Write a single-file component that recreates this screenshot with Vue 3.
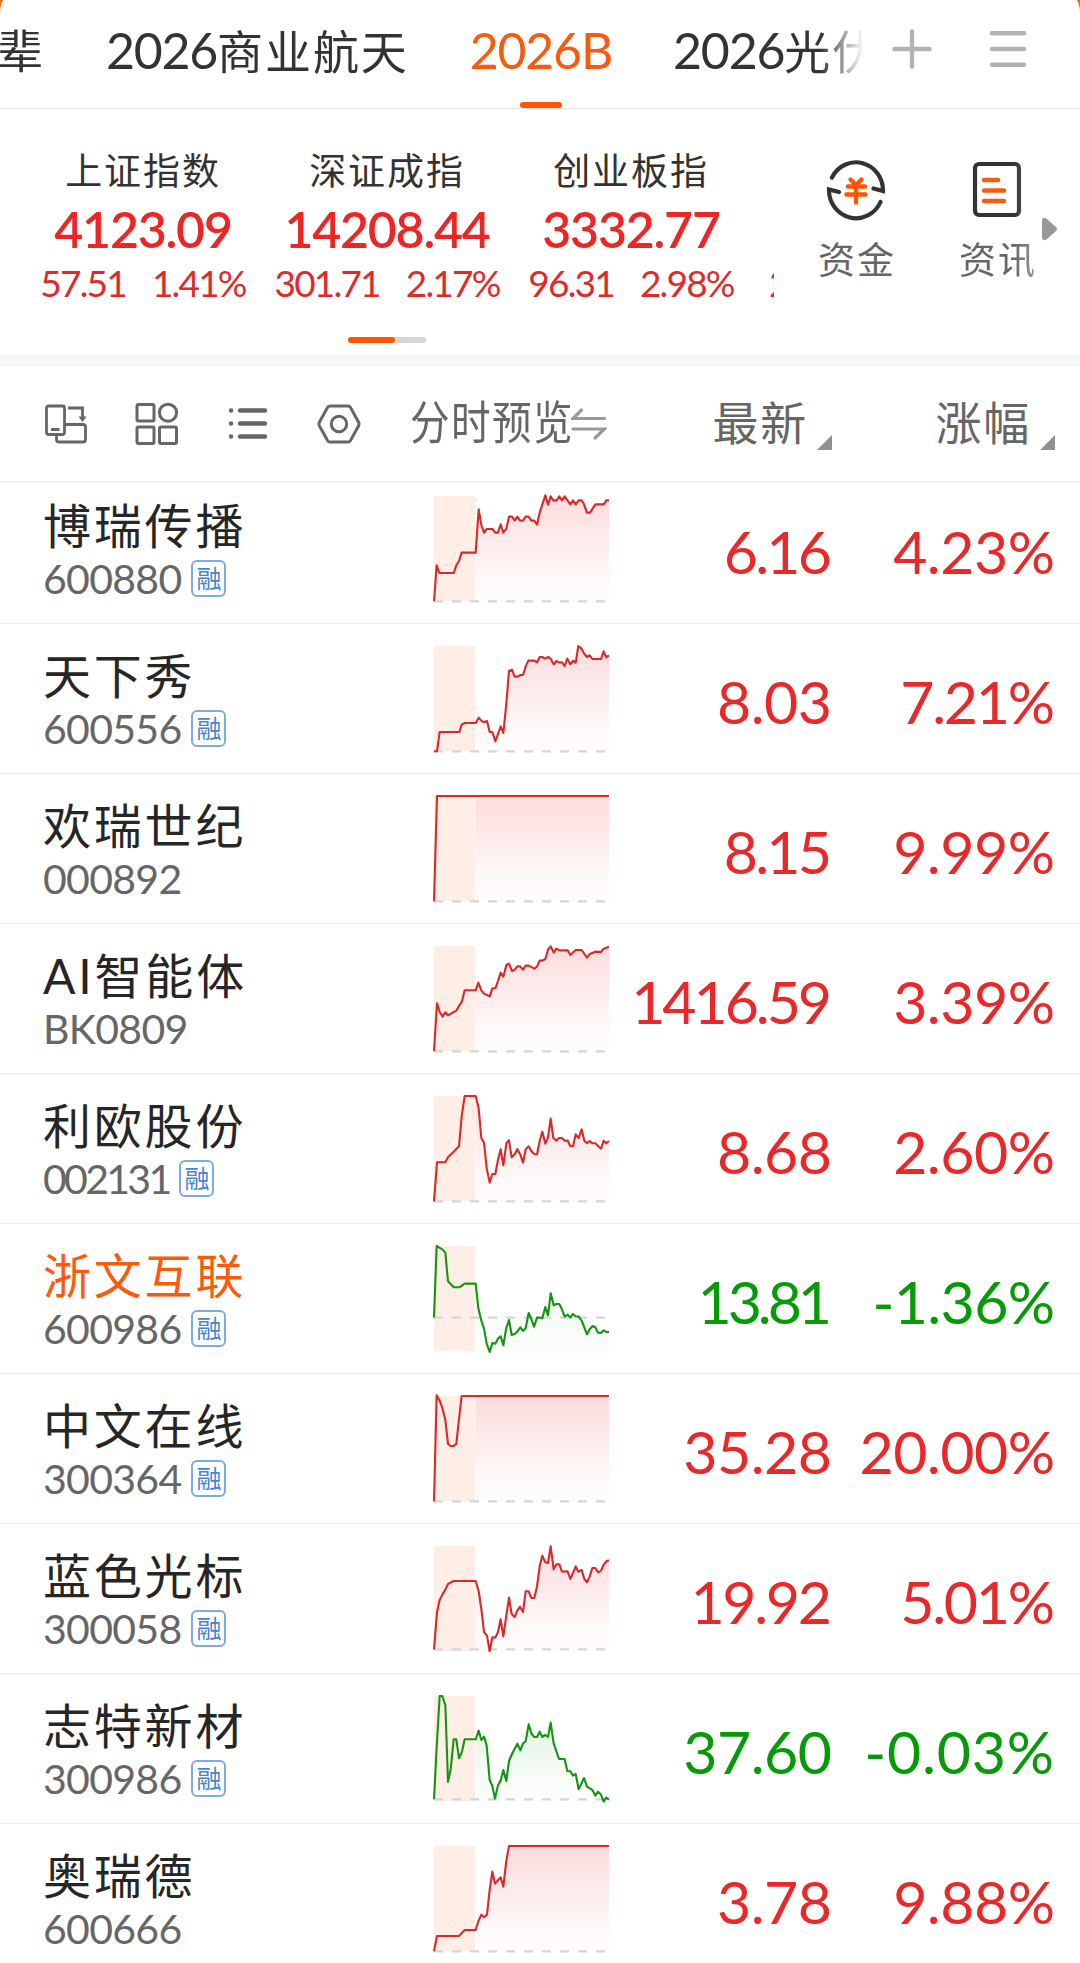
<script setup>
import { ref } from 'vue'

const tabs = [
  { year: '', name: '辈' },
  { year: '2026', name: '商业航天' },
  { year: '2026B', name: '' },
  { year: '2026', name: '光伏' },
]
const activeTab = ref(2)

const indices = [
  { name: '上证指数', value: '4123.09', change: '57.51', percent: '1.41%' },
  { name: '深证成指', value: '14208.44', change: '301.71', percent: '2.17%' },
  { name: '创业板指', value: '3332.77', change: '96.31', percent: '2.98%' },
]

// chart points live in a 525 x 316 box that starts at 42,48
const stocks = [
  {
    name: '博瑞传播', code: '600880', margin: true, price: '6.16', percent: '4.23%', base: 364,
    points: '42,364 50,256 58,279 101,279 109,256 117,243 125,218 167,218 176,88 184,135 192,158 200,147 217,147 226,158 234,158 242,133 250,158 259,146 267,110 276,110 284,122 292,110 300,122 309,122 317,110 326,110 334,122 343,122 351,134 359,98 367,73 376,46 384,74 392,49 400,61 410,61 418,49 426,61 434,49 451,73 459,61 467,73 476,61 485,61 492,73 501,98 510,98 526,73 551,73 559,61 567,61',
  },
  {
    name: '天下秀', code: '600556', margin: true, price: '8.03', percent: '7.21%', base: 364,
    points: '42,364 51,364 59,306 118,306 125,284 134,279 167,279 176,263 184,272 192,277 201,273 209,306 217,306 226,334 242,289 250,309 259,220 267,123 276,119 284,140 293,140 301,135 309,135 317,109 325,92 343,92 351,97 359,81 367,81 375,86 384,81 392,86 401,103 409,93 417,97 426,97 434,108 442,86 451,103 459,92 467,98 475,48 484,55 492,70 501,81 509,76 517,87 543,87 551,64 559,82 567,76',
  },
  {
    name: '欢瑞世纪', code: '000892', margin: false, price: '8.15', percent: '9.99%', base: 364,
    points: '42,364 51,48 567,48',
  },
  {
    name: 'AI智能体', code: 'BK0809', margin: false, price: '1416.59', percent: '3.39%', base: 364,
    points: '42,364 51,220 59,246 68,260 76,247 84,256 109,242 117,228 126,214 134,181 167,181 175,158 184,181 192,191 209,199 217,175 226,175 234,153 242,128 250,140 259,105 267,101 276,123 284,119 292,109 300,109 309,119 317,107 326,107 343,116 351,110 359,92 367,92 376,87 384,59 392,49 401,68 409,56 418,61 443,61 451,75 467,60 485,60 501,83 509,72 526,65 543,66 551,56 567,50',
  },
  {
    name: '利欧股份', code: '002131', margin: true, price: '8.68', percent: '2.60%', base: 364,
    points: '42,364 51,247 76,247 84,232 101,215 117,199 125,110 134,48 167,48 176,85 184,174 192,188 200,264 209,308 217,282 226,282 234,239 242,208 250,256 259,190 267,181 275,232 284,223 292,207 301,224 309,248 317,208 326,199 334,213 343,223 351,223 359,183 367,155 376,191 384,172 392,116 400,174 409,182 417,174 426,174 434,182 443,182 451,199 459,199 467,163 476,174 485,148 493,182 501,190 509,183 517,190 526,190 543,206 551,182 559,190 567,183',
  },
  {
    name: '浙文互联', code: '600986', margin: true, price: '13.81', percent: '-1.36%', base: 263, down: true, active: true,
    points: '42,263 50,48 58,53 67,58 76,68 84,154 101,172 118,172 134,161 167,161 175,234 184,272 192,296 200,341 209,366 217,339 226,341 234,326 242,319 250,346 259,293 267,270 275,315 284,312 292,305 301,292 309,303 317,294 326,249 334,267 342,290 351,263 359,263 367,265 376,231 384,256 392,190 401,226 409,222 418,222 426,238 434,260 443,254 451,263 459,252 467,259 476,260 485,272 501,313 509,298 518,288 526,292 534,308 543,309 551,301 559,306 567,306',
  },
  {
    name: '中文在线', code: '300364', margin: true, price: '35.28', percent: '20.00%', base: 364,
    points: '42,364 50,46 59,62 67,84 76,120 84,192 92,198 101,198 109,191 117,117 125,48 567,48',
  },
  {
    name: '蓝色光标', code: '300058', margin: true, price: '19.92', percent: '5.01%', base: 358,
    points: '42,358 51,247 59,210 67,194 76,179 84,162 101,153 167,153 176,183 184,237 192,306 201,317 209,364 217,322 226,323 234,306 242,268 250,319 259,256 267,203 275,252 284,261 292,242 300,230 309,246 317,184 326,184 334,204 343,204 351,170 359,108 367,77 376,97 384,99 392,49 401,118 409,103 418,103 426,125 443,124 451,147 459,129 467,109 475,125 485,120 493,147 501,157 509,140 517,114 526,114 534,127 543,122 551,104 559,94 567,91',
  },
  {
    name: '志特新材', code: '300986', margin: true, price: '37.60', percent: '-0.03%', base: 358, down: true,
    points: '42,358 50,202 59,48 67,48 76,76 84,306 92,268 101,178 109,178 117,235 126,215 134,178 167,178 176,152 184,180 192,170 200,197 209,300 217,318 225,356 234,316 242,302 250,270 259,303 267,243 276,222 292,191 301,211 309,190 317,184 326,133 334,160 342,171 351,171 359,155 367,171 376,165 384,171 392,128 401,190 417,237 434,237 442,273 451,274 459,287 467,282 476,328 492,294 501,320 517,330 526,347 534,335 543,344 551,365 559,353 567,359',
  },
  {
    name: '奥瑞德', code: '600666', margin: false, price: '3.78', percent: '9.88%', base: 364,
    points: '42,364 51,318 117,318 134,300 167,300 175,274 184,254 192,262 201,254 209,180 217,125 225,161 242,142 250,170 259,92 267,48 567,48',
  },
]

// the gradient only covers the session after the pre-market band
function areaPoints(stock) {
  const session = stock.points.split(' ').filter((p) => Number(p.split(',')[0]) >= 167)
  if (Number(session[0].split(',')[0]) > 167) {
    session.unshift('167,48')
  }
  return `167,364 ${session.join(' ')} 567,364`
}

// the digits are tabular: tighten around a "1", give room to a minus sign
function tracking(text, base, narrow) {
  const ones = text.split('1').length - 1
  const minus = text.startsWith('-') ? 8 : 0
  return { '--tracking': `${base + (minus - ones * narrow) / text.length}px` }
}
</script>

<template>
  <div class="page">
    <header class="tab-bar">
      <nav class="tabs">
        <div
          v-for="(tab, i) in tabs"
          :key="i"
          class="tab"
          :class="{ active: i === activeTab }"
          @click="activeTab = i"
        >
          <span v-if="tab.year" class="tab-year">{{ tab.year }}</span><span class="tab-name">{{ tab.name }}</span>
        </div>
      </nav>
      <svg class="tab-add" width="40" height="40" viewBox="0 0 40 40">
        <path d="M2.5 20H37.5M20 2.5V37.5" stroke="#b2b2b2" stroke-width="4.4" stroke-linecap="round" />
      </svg>
      <svg class="tab-menu" width="40" height="40" viewBox="0 0 40 40">
        <path d="M4 4.2H36M4 20H36M4 35.8H36" stroke="#b2b2b2" stroke-width="4.4" stroke-linecap="round" />
      </svg>
    </header>

    <section class="market">
      <div class="market-left">
        <div class="indices">
          <div v-for="item in indices" :key="item.name" class="index">
            <div class="index-name">{{ item.name }}</div>
            <div class="index-value">{{ item.value }}</div>
            <div class="index-change">
              <span>{{ item.change }}</span>
              <span>{{ item.percent }}</span>
            </div>
          </div>
          <div class="index index-next">
            <div class="index-change"><span>28.51</span></div>
          </div>
        </div>
        <div class="pager"><i></i></div>
      </div>
      <div class="shortcuts">
        <div class="shortcut">
          <svg width="60" height="62" viewBox="0 0 60 62" fill="none">
            <g stroke="#333" stroke-width="4.2" stroke-linecap="round">
              <path d="M6 18.500A27 28 0 0 1 57 32L47.500 29.500" />
              <path d="M54.500 43A27 28 0 0 1 3 30.500L13 33" />
            </g>
            <path d="M24.500 20.500L30 26L35.500 20.500M22 27.500H39M20.500 35.500H39.500M30 27V43.500" stroke="#ff5500" stroke-width="4.4" stroke-linecap="round" />
          </svg>
          <span>资金</span>
        </div>
        <div class="shortcut shortcut-news">
          <svg width="60" height="62" viewBox="0 0 60 62" fill="none">
            <rect x="8" y="5" width="44" height="51" rx="4" stroke="#333" stroke-width="4.2" />
            <path d="M17 21H31M17 31.500H37M17 42H37" stroke="#f75b10" stroke-width="4.4" stroke-linecap="round" />
          </svg>
          <span>资讯</span>
        </div>
        <svg class="more" width="16" height="24" viewBox="0 0 16 24">
          <path d="M0 3Q1-1 5 2L14 10Q16 12 14 14L5 22Q1 25 0 21Z" fill="#999" />
        </svg>
      </div>
    </section>

    <section class="table-head">
      <div class="tools">
        <svg width="44" height="44" viewBox="0 0 44 44" fill="none" stroke="#666" stroke-width="2.8">
          <rect x="2.5" y="4" width="18" height="28.5" rx="2" />
          <path d="M12.5 33V37.5Q12.5 40 15 40H39Q41.5 40 41.5 37.5V25Q41.5 22.5 39 22.5H21" />
          <path d="M7 27.5H15.5" stroke-width="3" />
          <path d="M24 6H38.5V15" />
          <path d="M34.500 14.500H42.500L38.500 20Z" fill="#666" stroke="none" />
        </svg>
        <svg width="44" height="44" viewBox="0 0 44 44" fill="none" stroke="#666" stroke-width="3">
          <rect x="2" y="2.5" width="17" height="16.500" rx="1.500" />
          <ellipse cx="33" cy="10.700" rx="8.600" ry="8.500" />
          <rect x="2" y="25" width="17" height="16.500" rx="1.500" />
          <rect x="24.500" y="25" width="17" height="16.500" rx="1.500" />
        </svg>
        <svg width="44" height="44" viewBox="0 0 44 44" fill="none" stroke="#666" stroke-width="4.4" stroke-linecap="round">
          <path d="M14 8.500H39M14 21.500H39M14 34.500H39M5 8.500H5.100M5 21.500H5.100M5 34.500H5.100" />
        </svg>
        <svg width="44" height="44" viewBox="0 0 44 44" fill="none" stroke="#666" stroke-width="3">
          <path d="M13 4H31Q32.500 4 33.500 5.500L41.500 20Q42.500 22 41.500 24L33.500 38.500Q32.500 40 31 40H13Q11.500 40 10.500 38.500L2.500 24Q1.500 22 2.500 20L10.500 5.500Q11.500 4 13 4Z" />
          <circle cx="22" cy="22" r="7.700" />
        </svg>
      </div>
      <div class="head-preview">
        <span>分时预览</span>
        <svg width="36" height="32" viewBox="0 0 36 32" fill="none" stroke="#999" stroke-width="3.2" stroke-linecap="round">
          <path d="M33.500 10.500H2L10.500 2M2 21H33.500L24 30" />
        </svg>
      </div>
      <div class="head-cell">最新<i class="sort"></i></div>
      <div class="head-cell head-percent">涨幅<i class="sort"></i></div>
    </section>

    <main class="list">
      <div v-for="(stock, i) in stocks" :key="stock.code" class="row" :class="{ down: stock.down }">
        <div class="stock">
          <div class="stock-name" :class="{ active: stock.active }">{{ stock.name }}</div>
          <div class="stock-code">
            <span class="code" :style="tracking(stock.code, -0.7, 6)">{{ stock.code }}</span>
            <span v-if="stock.margin" class="badge">融</span>
          </div>
        </div>
        <svg class="chart" viewBox="42 48 525 316" preserveAspectRatio="none">
          <defs>
            <linearGradient :id="`fill-${i}`" gradientUnits="userSpaceOnUse" x1="0" y1="48" x2="0" y2="364">
              <stop offset="0" :stop-color="stock.down ? '#0a9a0a' : '#ee2020'" stop-opacity="0.16" />
              <stop offset="0.8" :stop-color="stock.down ? '#0a9a0a' : '#ee2020'" stop-opacity="0.025" />
              <stop offset="1" :stop-color="stock.down ? '#0a9a0a' : '#ee2020'" stop-opacity="0.015" />
            </linearGradient>
          </defs>
          <rect x="42" y="48" width="123" height="316" fill="#ffeee6" />
          <polygon :points="areaPoints(stock)" :fill="`url(#fill-${i})`" />
          <path :d="`M42 ${stock.base}H567`" stroke="#d5d6db" stroke-width="7" stroke-dasharray="27 27" />
          <polyline
            :points="stock.points"
            fill="none"
            :stroke="stock.down ? '#129512' : '#db2828'"
            stroke-width="6.3"
            stroke-linejoin="round"
          />
        </svg>
        <div class="price" :style="tracking(stock.price, -0.5, 9)">{{ stock.price }}</div>
        <div class="percent" :style="tracking(stock.percent, -0.5, 9)">{{ stock.percent }}</div>
      </div>
    </main>
  </div>
</template>

<style>
body {
  overflow: hidden;
  background: #fff;
}
</style>

<style scoped>
.page {
  width: 1080px;
  height: 1963px;
  overflow: hidden;
  background: linear-gradient(#f2640f 20px, #fff 20px);
  font-family: Lato, 'Noto Sans CJK SC', sans-serif;
  color: #333;
}

.tab-bar {
  display: flex;
  align-items: center;
  box-sizing: border-box;
  height: 109px;
  padding-bottom: 10px;
  border-bottom: 1px solid #e5e5e5;
  border-radius: 4px 4px 0 0 / 14px 14px 0 0;
  background: #fff;
}

.tabs {
  display: flex;
  flex: none;
  gap: 61px;
  width: 864px;
  height: 108px;
  margin-bottom: -9px;
  overflow: hidden;
  white-space: nowrap;
  -webkit-mask-image: linear-gradient(90deg, #000 820px, transparent 864px);
  mask-image: linear-gradient(90deg, #000 820px, transparent 864px);
}

.tab {
  position: relative;
  display: flex;
  flex: none;
  align-items: baseline;
  height: 108px;
  line-height: 101px;
  cursor: pointer;
}

.tab:first-child {
  margin-left: -3px;
}

.tab-year {
  font-size: 50px;
  letter-spacing: -1.2px;
}

.tab-name {
  font-size: 46px;
  letter-spacing: 1.9px;
}

.tab.active {
  color: #f75b10;
}

.tab.active::after {
  position: absolute;
  bottom: 0;
  left: 50%;
  width: 42px;
  height: 6px;
  margin-left: -21px;
  border-radius: 3px;
  background: #ff5500;
  content: '';
}

.tab-add {
  flex: none;
  margin-left: 28px;
}

.tab-menu {
  flex: none;
  margin-left: 56px;
}

.market {
  display: flex;
  height: 246px;
  border-bottom: 12px solid #f6f7f9;
}

.market-left {
  display: flex;
  flex-direction: column;
  align-items: center;
  width: 774px;
}

.indices {
  display: flex;
  align-items: flex-end;
  box-sizing: border-box;
  width: 774px;
  height: 192px;
  padding: 40px 0 0 21px;
  overflow: hidden;
}

.index {
  flex: none;
  width: 244px;
  height: 152px;
  text-align: center;
  white-space: nowrap;
}

.index-name {
  height: 48px;
  line-height: 43px;
  font-size: 37px;
  letter-spacing: 1.9px;
}

.index-value {
  height: 64px;
  line-height: 64px;
  font-size: 50px;
  font-weight: 600;
  letter-spacing: -1.2px;
  color: #ee2525;
}

.index-change {
  display: flex;
  justify-content: center;
  gap: 26px;
  height: 40px;
  line-height: 43px;
  font-size: 37px;
  letter-spacing: -1.8px;
  color: #df2a2a;
}

.index-next {
  padding-top: 112px;
  box-sizing: border-box;
}

.index-next .index-change {
  justify-content: flex-start;
  padding-left: 16px;
}

.pager {
  width: 78px;
  height: 6px;
  margin-top: 36px;
  border-radius: 3px;
  background: #d3d6da;
}

.pager i {
  display: block;
  width: 47px;
  height: 6px;
  border-radius: 3px;
  background: #ff5500;
}

.shortcuts {
  display: flex;
  width: 306px;
}

.shortcut {
  display: flex;
  flex: none;
  flex-direction: column;
  align-items: center;
  width: 141px;
  margin-left: 11px;
  padding-top: 50px;
  font-size: 37px;
  letter-spacing: 1.9px;
  line-height: 56px;
  color: #666;
  white-space: nowrap;
}

.shortcut span {
  margin-top: 11px;
  padding-left: 3px;
}

.shortcut-news {
  width: 115px;
  margin-left: 13px;
  margin-right: -12px;
  -webkit-mask-image: linear-gradient(90deg, #000 75px, rgba(0, 0, 0, 0.5) 108px);
  mask-image: linear-gradient(90deg, #000 75px, rgba(0, 0, 0, 0.5) 108px);
}

.more {
  flex: none;
  margin-top: 108px;
}

.table-head {
  display: flex;
  align-items: center;
  box-sizing: border-box;
  height: 115px;
  padding-bottom: 1px;
  border-bottom: 1px solid #ebebeb;
  font-size: 46px;
  color: #666;
}

.tools {
  display: flex;
  gap: 47px;
  width: 366px;
  padding-left: 44px;
}

.head-preview {
  display: flex;
  align-items: center;
  width: 198px;
  line-height: 64px;
  white-space: nowrap;
}

.head-preview span {
  flex: none;
  width: 161px;
  margin-top: -4px;
  letter-spacing: 1.7px;
  transform: scaleX(0.86);
  transform-origin: 0 50%;
}

.head-preview svg {
  flex: none;
}

.head-cell {
  display: flex;
  align-items: flex-end;
  justify-content: flex-end;
  width: 224px;
  margin-top: -1px;
  line-height: 66px;
  letter-spacing: 1.7px;
}

.head-percent {
  width: 223px;
}

.sort {
  width: 15px;
  height: 15px;
  margin: 0 0 6px 9px;
  background: #909095;
  clip-path: polygon(100% 0, 100% 100%, 0 100%);
}

.list {
  display: flex;
  flex-direction: column;
  height: 1481px;
  overflow: hidden;
}

.row {
  display: flex;
  flex: none;
  box-sizing: border-box;
  height: 150px;
  border-bottom: 1px solid #ebebeb;
  color: #e92929;
}

.row:first-child {
  margin-top: -8px;
}

.row.down {
  color: #079a07;
}

.stock {
  box-sizing: border-box;
  width: 434px;
  padding-left: 43px;
}

.stock-name {
  height: 81px;
  line-height: 103px;
  font-size: 48px;
  letter-spacing: 2.8px;
  color: #262626;
}

.stock-name.active {
  color: #fa5a0a;
}

.stock-code {
  display: flex;
  align-items: center;
  height: 46px;
  font-size: 41px;
  color: #666;
}

.code {
  letter-spacing: var(--tracking);
}

.badge {
  box-sizing: border-box;
  width: 35px;
  height: 37px;
  margin: 1px 0 0 10px;
  border: 2px solid #7dabe0;
  border-radius: 6px;
  line-height: 32px;
  font-size: 25px;
  text-align: center;
  color: #4585cf;
}

.chart {
  flex: none;
  width: 175px;
  height: 105.3px;
  margin-top: 22px;
  overflow: visible;
}

/* trailing letter-spacing is negative, so the padding keeps the right edge in place */
.price,
.percent {
  flex: none;
  box-sizing: border-box;
  padding-right: calc(var(--tracking) * -1);
  line-height: 155px;
  font-size: 59px;
  letter-spacing: var(--tracking);
  text-align: right;
}

.price {
  width: 223px;
}

.percent {
  width: 223px;
}
</style>
